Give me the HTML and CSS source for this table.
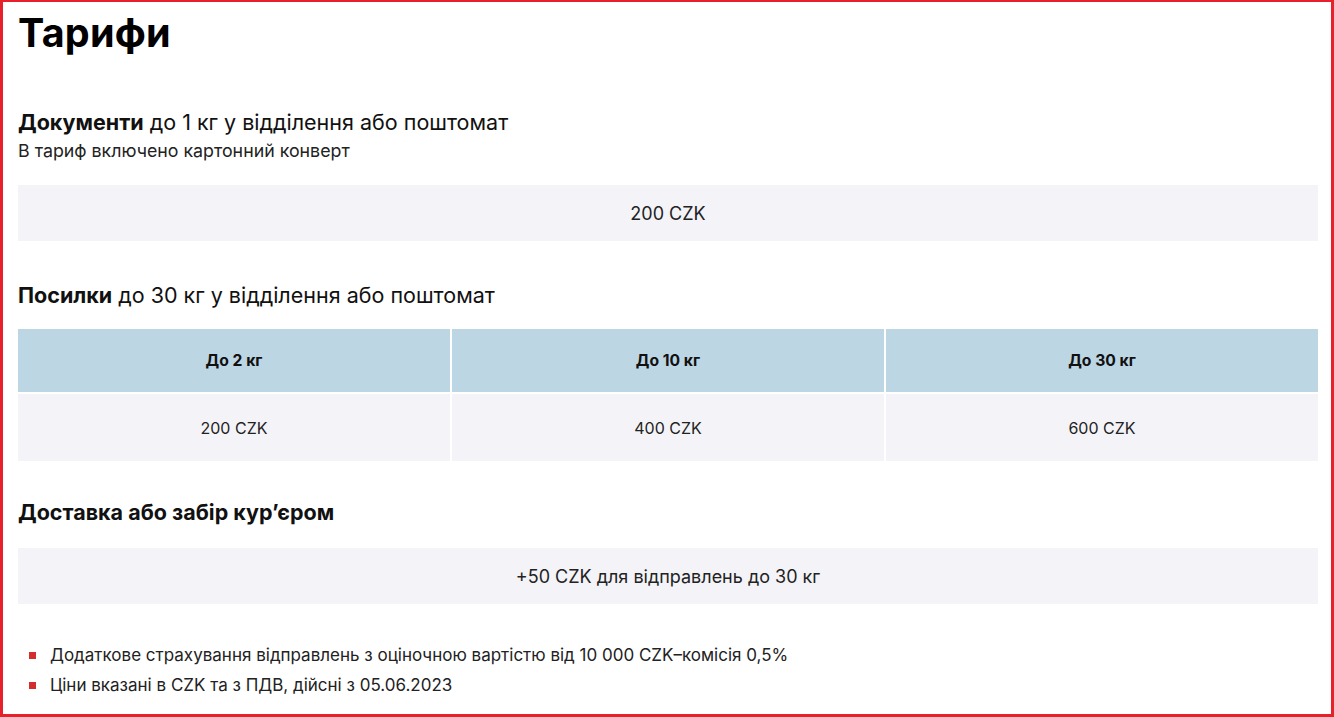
FILE: index.html
```html
<!DOCTYPE html>
<html lang="uk">
<head>
<meta charset="utf-8">
<title>Тарифи</title>
<link rel="stylesheet" href="styles.css">
</head>
<body>
<div class="frame">
  <h1 class="title">Тарифи</h1>

  <section class="block block-docs">
    <h2 class="heading"><b>Документи</b> до 1 кг у відділення або поштомат</h2>
    <p class="sub">В тариф включено картонний конверт</p>
    <div class="pricebox">200 CZK</div>
  </section>

  <section class="block block-parcels">
    <h2 class="heading"><b>Посилки</b> до 30 кг у відділення або поштомат</h2>
    <div class="table">
      <div class="th">До 2 кг</div>
      <div class="th">До 10 кг</div>
      <div class="th">До 30 кг</div>
      <div class="td">200 CZK</div>
      <div class="td">400 CZK</div>
      <div class="td">600 CZK</div>
    </div>
  </section>

  <section class="block block-courier">
    <h2 class="heading"><b>Доставка або забір кур’єром</b></h2>
    <div class="pricebox">+50 CZK для відправлень до 30 кг</div>
  </section>

  <ul class="notes">
    <li>Додаткове страхування відправлень з оціночною вартістю від 10 000 CZK–комісія 0,5%</li>
    <li>Ціни вказані в CZK та з ПДВ, дійсні з 05.06.2023</li>
  </ul>
</div>
</body>
</html>
```

FILE: styles.css
```css
html, body {
  margin: 0;
  padding: 0;
  background: #fff;
}
body {
  font-family: Inter, "Noto Sans", sans-serif;
  color: #1f1f1f;
}
.frame {
  box-sizing: border-box;
  height: 717px;
  border-style: solid;
  border-color: #e8202a;
  border-width: 2px 3px 3px 3px;
  padding: 8px 13px 0 15px;
  overflow: hidden;
}
.title {
  margin: 0;
  font-size: 39.5px;
  line-height: 46px;
  font-weight: 700;
  color: #000;
  letter-spacing: 0.2px;
}
.block-docs { margin-top: 53px; }
.heading {
  margin: 0;
  font-size: 21.5px;
  line-height: 26px;
  font-weight: 400;
  color: #111;
}
.heading b { font-weight: 700; }
.sub {
  margin: 5px 0 0;
  font-size: 17.8px;
  line-height: 22px;
  color: #222;
}
.pricebox {
  margin-top: 23px;
  height: 56px;
  background: #f4f4f8;
  display: flex;
  align-items: center;
  justify-content: center;
  font-size: 18px;
  color: #222;
}
.block-parcels { margin-top: 41px; }
.table {
  margin-top: 21px;
  display: grid;
  grid-template-columns: 1fr 1fr 1fr;
  grid-template-rows: 63px 67px;
  gap: 2px;
}
.th {
  background: #bdd6e4;
  display: flex;
  align-items: center;
  justify-content: center;
  font-size: 15.7px;
  font-weight: 700;
  color: #111;
}
.td {
  background: #f4f4f8;
  display: flex;
  align-items: center;
  justify-content: center;
  font-size: 16px;
  color: #222;
}
.block-courier { margin-top: 38px; }
.block-courier .pricebox { margin-top: 23px; }
.notes {
  list-style: none;
  margin: 36px 0 0;
  padding: 0 0 0 8px;
}
.notes li {
  position: relative;
  padding-left: 24px;
  font-size: 17px;
  line-height: 30px;
  color: #222;
}
.notes li::before {
  content: "";
  position: absolute;
  left: 3px;
  top: 12px;
  width: 7px;
  height: 7px;
  background: #d42d2d;
}
```
